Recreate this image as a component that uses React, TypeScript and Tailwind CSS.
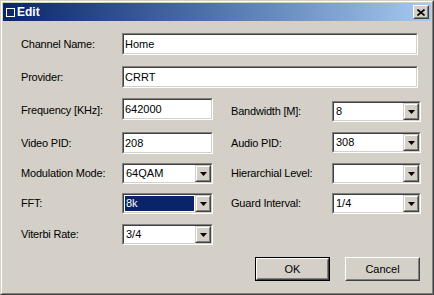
import React from "react";

const font = { fontFamily: '"Liberation Sans", Arial, sans-serif' };

function Sunken({ w, h, children }: { w: string; h: string; children?: React.ReactNode }) {
  return (
    <div className={`${w} ${h} border border-t-[#808080] border-l-[#808080] border-b-white border-r-white`}>
      <div className="h-full border border-t-[#404040] border-l-[#404040] border-b-[#d4d0c8] border-r-[#d4d0c8] bg-white flex items-center">
        {children}
      </div>
    </div>
  );
}

function TextBox({ w, value }: { w: string; value: string }) {
  return (
    <Sunken w={w} h="h-[22px]">
      <span className="px-[1px] text-[11px] leading-none text-black">{value}</span>
    </Sunken>
  );
}

function Combo({ w, value, selected }: { w: string; value: string; selected?: boolean }) {
  return (
    <Sunken w={w} h="h-[21px]">
      <div className="flex-1 h-full p-[1px] flex">
        <div className={`flex-1 flex items-center px-[1px] text-[11px] leading-none ${selected ? "bg-[#0a246a] text-white" : "text-black"}`}>
          {value}
        </div>
      </div>
      <div className="w-[16px] h-full border border-t-[#d4d0c8] border-l-[#d4d0c8] border-b-[#404040] border-r-[#404040]">
        <div className="h-full border border-t-white border-l-white border-b-[#808080] border-r-[#808080] bg-[#d4d0c8] flex items-center justify-center">
          <svg width="7" height="4" viewBox="0 0 7 4">
            <path d="M0 0h7L3.5 4z" fill="black" />
          </svg>
        </div>
      </div>
    </Sunken>
  );
}

function Label({ text, w = "w-[101px]" }: { text: string; w?: string }) {
  return <div className={`${w} flex items-center text-[11px] text-black tracking-[-0.2px]`}>{text}</div>;
}

function Button({ text, def }: { text: string; def?: boolean }) {
  const inner = (
    <div className="h-full border border-t-white border-l-white border-b-[#404040] border-r-[#404040]">
      <div className="h-full border border-t-[#d4d0c8] border-l-[#d4d0c8] border-b-[#808080] border-r-[#808080] flex items-center justify-center text-[11px] text-black">
        {text}
      </div>
    </div>
  );
  return (
    <div className={`w-[75px] h-[24px] ${def ? "border border-black" : ""}`}>{inner}</div>
  );
}

export default function App() {
  return (
    <div style={font} className="w-[434px] h-[295px] border border-t-[#d4d0c8] border-l-[#d4d0c8] border-b-[#404040] border-r-[#404040]">
      <div className="h-full border border-t-white border-l-white border-b-[#808080] border-r-[#808080] bg-[#d4d0c8] p-[1px] flex flex-col">
        {/* title bar */}
        <div className="h-[18px] flex items-center bg-gradient-to-r from-[#0a246a] to-[#a6caf0] pl-[3px] pr-[2px]">
          <div className="w-[9px] h-[9px] border border-white mr-[2px]" />
          <span className="text-[12px] font-bold text-white leading-none">Edit</span>
          <div className="ml-auto w-[16px] h-[14px] border border-t-white border-l-white border-b-[#404040] border-r-[#404040]">
            <div className="h-full border border-t-[#d4d0c8] border-l-[#d4d0c8] border-b-[#808080] border-r-[#808080] bg-[#d4d0c8] flex items-center justify-center">
              <svg width="8" height="7" viewBox="0 0 8 7">
                <path d="M0.5 0.5L7.5 6.5M7.5 0.5L0.5 6.5" stroke="black" strokeWidth="1.6" />
              </svg>
            </div>
          </div>
        </div>

        <div className="flex flex-col pl-[18px]">
          <div className="flex h-[22px] mt-[12px]">
            <Label text="Channel Name:" />
            <TextBox w="w-[296px]" value="Home" />
          </div>
          <div className="flex h-[22px] mt-[11px]">
            <Label text="Provider:" />
            <TextBox w="w-[296px]" value="CRRT" />
          </div>
          <div className="flex h-[24px] mt-[10px]">
            <Label text="Frequency [KHz]:" />
            <TextBox w="w-[91px]" value="642000" />
            <div className="w-[18px]" />
            <div className="flex w-[101px] pt-[2px]"><Label text="Bandwidth [M]:" /></div>
            <div className="pt-[3px]"><Combo w="w-[89px]" value="8" /></div>
          </div>
          <div className="flex h-[22px] mt-[10px]">
            <Label text="Video PID:" />
            <TextBox w="w-[91px]" value="208" />
            <div className="w-[18px]" />
            <Label text="Audio PID:" />
            <Combo w="w-[89px]" value="308" />
          </div>
          <div className="flex h-[21px] mt-[9px]">
            <Label text="Modulation Mode:" />
            <Combo w="w-[91px]" value="64QAM" />
            <div className="w-[18px]" />
            <Label text="Hierarchial Level:" />
            <Combo w="w-[89px]" value="" />
          </div>
          <div className="flex h-[21px] mt-[9px]">
            <Label text="FFT:" />
            <Combo w="w-[91px]" value="8k" selected />
            <div className="w-[18px]" />
            <Label text="Guard Interval:" />
            <Combo w="w-[89px]" value="1/4" />
          </div>
          <div className="flex h-[21px] mt-[10px]">
            <Label text="Viterbi Rate:" />
            <Combo w="w-[91px]" value="3/4" />
          </div>
          <div className="flex h-[24px] mt-[12px] pl-[234px] gap-[15px]">
            <Button text="OK" def />
            <Button text="Cancel" />
          </div>
        </div>
      </div>
    </div>
  );
}
